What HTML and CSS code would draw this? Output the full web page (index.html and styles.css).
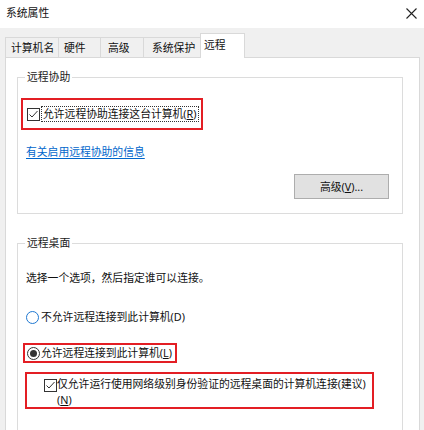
FILE: index.html
```html
<!DOCTYPE html>
<html lang="zh-CN">
<head>
<meta charset="utf-8">
<title>系统属性</title>
<link rel="stylesheet" href="styles.css">
</head>
<body>
<div class="titlebar">
  <span class="title">系统属性</span>
  <svg class="close" width="11" height="11" viewBox="0 0 11 11"><path d="M0.5 0.5L10.5 10.5M10.5 0.5L0.5 10.5" stroke="#222" stroke-width="1.1" fill="none"/></svg>
</div>
<div class="window">
  <div class="tabs">
    <div class="tab t1">计算机名</div>
    <div class="tab t2">硬件</div>
    <div class="tab t3">高级</div>
    <div class="tab t4">系统保护</div>
    <div class="tab active">远程</div>
  </div>
  <div class="panel">
    <fieldset class="group g1">
      <legend>远程协助</legend>
      <div class="hl hl1">
        <svg class="cb" width="13" height="13" viewBox="0 0 13 13"><rect x="0.5" y="0.5" width="12" height="12" fill="#fff" stroke="#333"/><path d="M2.5 6.5L5 9L10.5 3" stroke="#333" stroke-width="1" fill="none"/></svg>
        <span class="focus">允许远程协助连接这台计算机(<u>R</u>)</span>
      </div>
      <a class="link" href="#">有关启用远程协助的信息</a>
      <div class="btnrow"><button class="btn">高级(<u>V</u>)...</button></div>
    </fieldset>
    <fieldset class="group g2">
      <legend>远程桌面</legend>
      <p class="desc">选择一个选项，然后指定谁可以连接。</p>
      <div class="option">
        <span class="radio"></span>
        <span>不允许远程连接到此计算机(D)</span>
      </div>
      <div class="hl hl2">
        <span class="radio on"></span>
        <span>允许远程连接到此计算机(<u>L</u>)</span>
      </div>
      <div class="hl hl3">
        <svg class="cb cb3" width="13" height="13" viewBox="0 0 13 13"><rect x="0.5" y="0.5" width="12" height="12" fill="#fff" stroke="#333"/><path d="M2.5 6.5L5 9L10.5 3" stroke="#333" stroke-width="1" fill="none"/></svg>
        <span class="multi">仅允许运行使用网络级别身份验证的远程桌面的计算机连接(建议)<br>(<u>N</u>)</span>
      </div>
    </fieldset>
  </div>
</div>
</body>
</html>
```

FILE: styles.css
```css
* { box-sizing: border-box; }
html, body { margin: 0; padding: 0; }
body {
  width: 424px;
  height: 430px;
  overflow: hidden;
  background: #f0f0f0;
  font-family: "Noto Sans", "Noto Sans CJK SC", sans-serif;
  font-size: 10.8px;
  line-height: 16px;
  color: #111;
}
u { text-decoration: underline; text-underline-offset: 1px; }

.titlebar {
  height: 28px;
  background: #fff;
  display: flex;
  align-items: center;
  justify-content: space-between;
  padding: 0 6px 2px 6px;
}
.title { font-size: 10.8px; }
.close { margin-right: 1px; }

.window {
  padding: 5px 4px 0 5px;
}
.tabs {
  display: flex;
  align-items: flex-end;
  height: 24px;
}
.tab {
  height: 20px;
  line-height: 19px;
  border: 1px solid #d9d9d9;
  border-bottom: none;
  border-right: none;
  background: #f0f0f0;
  padding-left: 5px;
  white-space: nowrap;
}
.t1 { width: 53px; }
.t2 { width: 42px; }
.t3 { width: 43px; padding-left: 7px; }
.t4 { width: 57px; padding-left: 8px; }
.tab.active {
  width: 45px;
  height: 25px;
  line-height: 22px;
  background: #fff;
  border-right: 1px solid #d9d9d9;
  padding-left: 3px;
  margin-bottom: -1px;
  position: relative;
  z-index: 1;
}

.panel {
  background: #fff;
  border: 1px solid #d9d9d9;
  height: 380px;
  padding: 11px 0 0 11px;
}

.group {
  margin: 0;
  padding: 0 0 14px 0;
  border: 1px solid #dcdcdc;
  width: 386px;
  min-width: 0;
}
.group legend {
  margin-left: 7px;
  padding: 0 2px;
  line-height: 16px;
  color: #1a1a1a;
}
.g2 { margin-top: 21px; padding-bottom: 40px; }

.hl {
  display: flex;
  align-items: center;
  border: 2px solid #e31e24;
}
.hl1 {
  margin: 13px 0 0 3px;
  width: 182px;
  height: 32px;
  padding-left: 4px;
}
.cb { flex: none; }
.focus {
  margin-left: 1px;
  border: 1px dotted #333;
  padding: 0 1px;
  line-height: 14px;
  white-space: nowrap;
}

.link {
  display: block;
  width: fit-content;
  margin: 14px 0 0 8px;
  color: #0066cc;
  text-decoration: underline;
  text-underline-offset: 2px;
}

.btnrow {
  display: flex;
  justify-content: flex-end;
  margin-top: 14px;
  padding-right: 13px;
}
.btn {
  width: 95px;
  height: 25px;
  background: #e1e1e1;
  border: 1px solid #adadad;
  font: inherit;
  color: #111;
  padding: 0;
}

.desc {
  margin: 19px 0 0 8px;
}

.option {
  display: flex;
  align-items: center;
  margin: 23px 0 0 8px;
  height: 16px;
}
.radio {
  flex: none;
  width: 13px;
  height: 13px;
  border-radius: 50%;
  border: 1px solid #1f78d1;
  background: #fff;
  margin-right: 2px;
}
.radio.on {
  border-color: #333;
  display: flex;
  align-items: center;
  justify-content: center;
  margin-right: 1px;
}
.radio.on::after {
  content: "";
  width: 7px;
  height: 7px;
  border-radius: 50%;
  background: #333;
}

.hl2 {
  margin: 18px 0 0 5px;
  width: 154px;
  height: 20px;
  padding-left: 2px;
}
.hl3 {
  margin: 9px 0 0 7px;
  width: 349px;
  height: 37px;
  align-items: flex-start;
  padding: 2px 0 0 17px;
  white-space: nowrap;
}
.cb3 { margin-top: 3px; }
.multi { line-height: 16px; }
```
